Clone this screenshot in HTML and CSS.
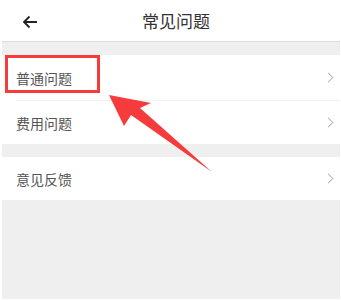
FILE: index.html
```html
<!DOCTYPE html>
<html lang="zh-CN">
<head>
    <meta charset="UTF-8">
    <meta name="viewport" content="width=device-width, initial-scale=1.0">
    <title>常见问题</title>
    <link rel="stylesheet" href="styles.css">
</head>
<body>

    <div class="page">
        <div class="header">
            <span class="back">
                <svg width="16" height="14" viewBox="0 0 16 14">
                    <path d="M15 7H2M7.5 1.5L2 7l5.5 5.5" fill="none" stroke="#222" stroke-width="1.8"/>
                </svg>
            </span>
            <h1 class="title">常见问题</h1>
        </div>

        <div class="group">
            <div class="item"><span>普通问题</span><i class="chev"></i></div>
            <div class="item"><span>费用问题</span><i class="chev"></i></div>
        </div>

        <div class="group">
            <div class="item"><span>意见反馈</span><i class="chev"></i></div>
        </div>

        <div class="mark"></div>
        <svg class="arrow" width="341" height="300" viewBox="0 0 341 300">
            <polygon points="109,95 151,103 140,108 212,172 131,115 124,126" fill="#f53b3b"/>
        </svg>
    </div>

</body>
</html>
```

FILE: styles.css
```css
body{
    margin: 0;
    padding: 0;
    background: #fff;
    font-family: "Noto Sans CJK SC", "Noto Sans", sans-serif;
}

.page{
    position: relative;
    margin: 0 1px 1px 2px;
    height: 299px;
    background: #efefef;
    overflow: hidden;
}

.header{
    height: 41px;
    padding-left: 10px;
    background: #fff;
    border-bottom: 1px solid #dcdcdc;
    display: flex;
    align-items: center;
    justify-content: center;
    position: relative;
}

.back{
    position: absolute;
    left: 20px;
    top: 15px;
    line-height: 0;
}

.title{
    margin: 0;
    font-size: 17px;
    font-weight: normal;
    color: #333;
}

.group{
    margin-top: 13px;
    background: #fff;
}

.item{
    height: 43px;
    margin-left: 14px;
    padding-right: 8px;
    display: flex;
    align-items: center;
    justify-content: space-between;
    font-size: 14px;
    color: #555;
    border-top: 1px solid #f0f0f0;
}

.item:first-child{
    border-top: none;
    height: 45px;
}

.group + .group .item:first-child{
    height: 43px;
}

.chev{
    width: 6px;
    height: 6px;
    border-top: 1.3px solid #bbb;
    border-right: 1.3px solid #bbb;
    transform: rotate(45deg);
}

.mark{
    position: absolute;
    left: 3px;
    top: 55px;
    width: 89px;
    height: 32px;
    border: 3px solid #f53b3b;
}

.arrow{
    position: absolute;
    left: -2px;
    top: 0;
}
```
